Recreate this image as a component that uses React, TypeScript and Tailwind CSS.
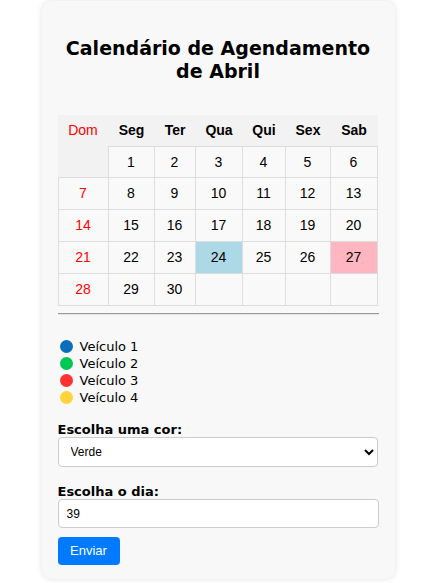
import React from 'react';

const weekDays = ['Dom', 'Seg', 'Ter', 'Qua', 'Qui', 'Sex', 'Sab'];

// april starts on a monday
const weeks: (number | null)[][] = [
  [null, 1, 2, 3, 4, 5, 6],
  [7, 8, 9, 10, 11, 12, 13],
  [14, 15, 16, 17, 18, 19, 20],
  [21, 22, 23, 24, 25, 26, 27],
  [28, 29, 30, null, null, null, null],
];

const highlights: Record<number, string> = {
  24: 'bg-[#add8e6]',
  27: 'bg-[#ffb6c1]',
};

const vehicles = [
  { name: 'Veículo 1', color: 'bg-[#0a6ebd]' },
  { name: 'Veículo 2', color: 'bg-[#00c853]' },
  { name: 'Veículo 3', color: 'bg-[#ff3131]' },
  { name: 'Veículo 4', color: 'bg-[#ffd43b]' },
];

export default function App() {
  return (
    <div className="min-h-screen bg-white pt-px">
      <div className="w-[353px] mx-auto bg-[#f8f8f8] rounded-[10px] shadow-[0_0_6px_rgba(0,0,0,0.12)] px-4 pt-4 pb-[14px]">
        {/* Title */}
        <h2 className="mt-[20px] mb-[32px] text-center text-[19px] leading-[23px] font-bold text-black font-['DejaVu_Sans',sans-serif]">
          Calendário de Agendamento de Abril
        </h2>

        {/* Calendar */}
        <div className="grid grid-cols-[51px_46px_41px_47px_43px_45px_47px] font-['Liberation_Sans',Arial,sans-serif] text-[14px] text-black">
          {weekDays.map((d, i) => (
            <div
              key={d}
              className={`h-[31px] flex items-center justify-center bg-[#f2f2f2] font-bold ${i === 0 ? 'text-[#ff0000] font-normal' : ''}`}
            >
              {d}
            </div>
          ))}
          {weeks.map((week, wi) =>
            week.map((day, di) => {
              if (wi === 0 && di === 0) {
                return <div key="empty" className="h-[32px] bg-[#f2f2f2] border-r border-b border-[#ddd]" />;
              }
              const borders = `border-r border-b border-[#ddd] ${di === 0 ? 'border-l' : ''} ${wi === 0 ? 'border-t' : ''}`;
              const bg = day && highlights[day] ? highlights[day] : 'bg-[#f9f9f9]';
              return (
                <div
                  key={`${wi}-${di}`}
                  className={`h-[32px] flex items-center justify-center ${borders} ${bg} ${di === 0 ? 'text-[#ff0000]' : ''}`}
                >
                  {day ?? ''}
                </div>
              );
            })
          )}
        </div>

        <hr className="mt-[7px] border-t border-[#9a9a9a] border-b border-b-[#e6e6e6]" />

        {/* Legend */}
        <ul className="mt-[23px] font-['DejaVu_Sans',sans-serif] text-[13px] text-black">
          {vehicles.map((v) => (
            <li key={v.name} className="h-[17px] flex items-center gap-[7px] pl-[2px]">
              <span className={`w-[13px] h-[13px] rounded-full ${v.color}`} />
              <span>{v.name}</span>
            </li>
          ))}
        </ul>

        {/* Form */}
        <form className="font-['DejaVu_Sans',sans-serif]" onSubmit={(e) => e.preventDefault()}>
          <label className="block mt-[16px] text-[13px] leading-[15px] font-bold text-black">Escolha uma cor:</label>
          <select
            defaultValue="verde"
            className="block w-[320px] h-[30px] px-[8px] bg-white border border-[#ccc] rounded-[4px] text-[12px] text-black font-['Liberation_Sans',Arial,sans-serif]"
          >
            <option value="azul">Azul</option>
            <option value="verde">Verde</option>
            <option value="vermelho">Vermelho</option>
            <option value="amarelo">Amarelo</option>
          </select>

          <label className="block mt-[17px] text-[13px] leading-[15px] font-bold text-black">Escolha o dia:</label>
          <input
            type="number"
            defaultValue={39}
            className="block w-[321px] h-[29px] px-[8px] bg-white border border-[#ccc] rounded-[4px] text-[12px] text-black font-['Liberation_Sans',Arial,sans-serif] [appearance:textfield]"
          />

          <button
            type="submit"
            className="mt-[9px] w-[62px] h-[28px] bg-[#007bff] text-white rounded-[4px] text-[13px] font-['Liberation_Sans',Arial,sans-serif]"
          >
            Enviar
          </button>
        </form>
      </div>
    </div>
  );
}
